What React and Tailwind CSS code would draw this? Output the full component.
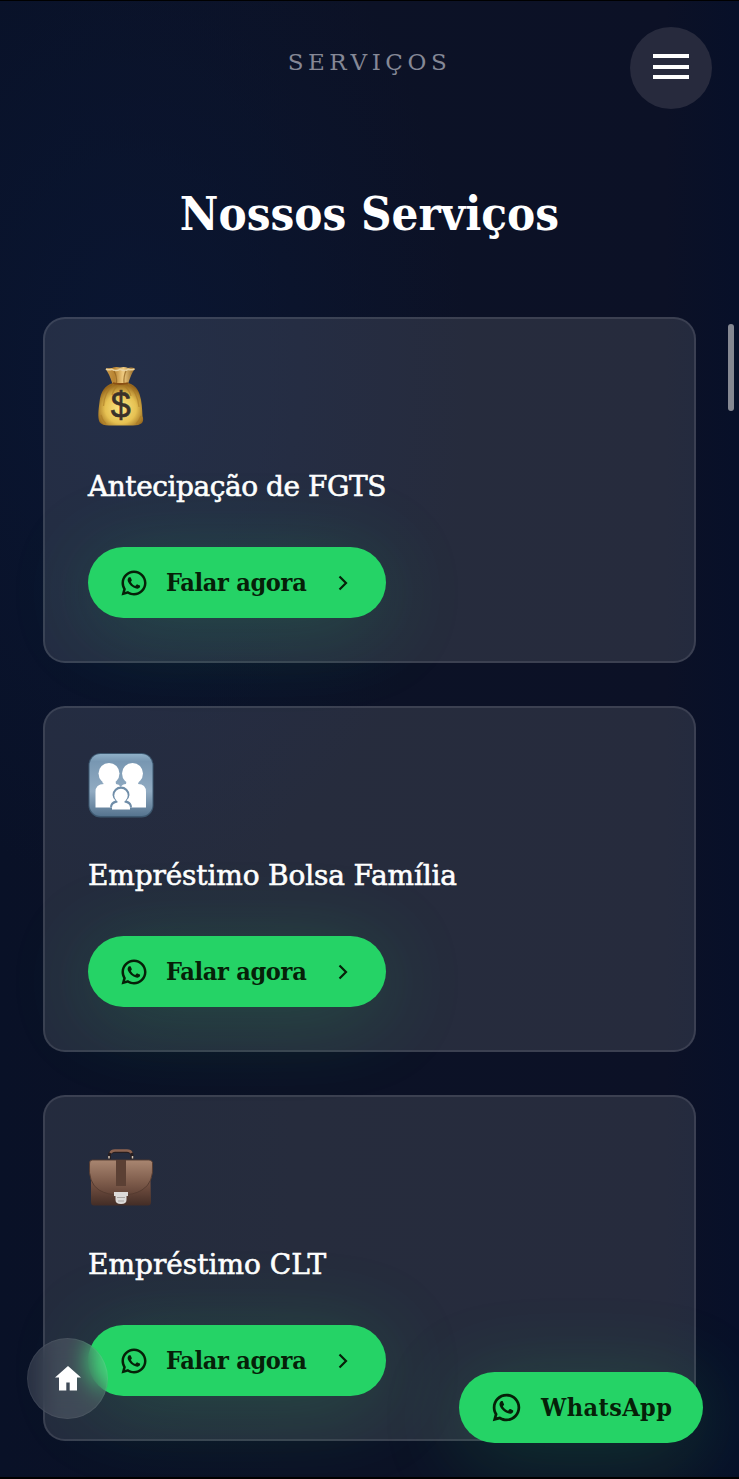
import React from "react";
import { RiWhatsappLine } from "react-icons/ri";

function MoneyBag() {
  return (
    <svg viewBox="0 0 66 66" className="block size-[66px]">
      <defs>
        <radialGradient id="bag" cx="0.5" cy="0.6" r="0.58">
          <stop offset="0" stopColor="#fbe684" />
          <stop offset="0.6" stopColor="#e6c152" />
          <stop offset="1" stopColor="#96661c" />
        </radialGradient>
        <linearGradient id="neck" x1="0" x2="1" y1="0" y2="0">
          <stop offset="0" stopColor="#c99a4c" />
          <stop offset="0.3" stopColor="#b98431" />
          <stop offset="0.6" stopColor="#f0cc82" />
          <stop offset="1" stopColor="#8d5f1d" />
        </linearGradient>
      </defs>
      <path d="M17.500 5Q21 9 24.500 20H40Q43 10 47 4.500Q44 3 40 4Q37 2.500 32 3.500Q27 2.500 24 4Q20 3.500 17.500 5Z" fill="url(#neck)" />
      <path d="M18 5Q21 6.500 24 5.300Q28 7.500 32 5.300Q37 7.500 40 5.300Q43 6.500 46.500 5" fill="none" stroke="#ead3a0" strokeWidth="1.500" />
      <path d="M26 7Q29 12 28.500 19M38 7Q35.500 12 36 19" fill="none" stroke="#8f611f" strokeOpacity="0.7" strokeWidth="1.300" />
      <path d="M25 19C17 21 12.500 28 11.500 38C10.500 46 9.500 53 11.500 58Q14 61.500 21 61.500H45Q51 61.500 54 59Q56 56 54.500 52C54 45 54 37 51.500 30C49 23 45 20.500 40 19Z" fill="url(#bag)" />
      <path d="M26 20C20 25 16 33 15.500 42M30 21C27 24 25 27 24 31M36 21C39 24 42 28 43 32M40 20C46 25 50 33 51 43M13 51Q14 56 18 60M53 52Q51 57 48 60" fill="none" stroke="#a87722" strokeOpacity="0.55" strokeWidth="1.300" />
      <path d="M25 19Q32 21 40 19" fill="none" stroke="#8a4f13" strokeWidth="1.800" />
      <text x="32.800" y="54" textAnchor="middle" fontFamily="Liberation Sans, sans-serif" fontSize="36" fill="#39312a" stroke="#39312a" strokeWidth="0.600">$</text>
    </svg>
  );
}

function Family() {
  return (
    <svg viewBox="0 0 66 66" className="block size-[66px]">
      <defs>
        <linearGradient id="tile" x1="0" x2="0" y1="0" y2="1">
          <stop offset="0" stopColor="#8fb0c8" />
          <stop offset="0.12" stopColor="#7897b2" />
          <stop offset="0.6" stopColor="#91abc2" />
          <stop offset="1" stopColor="#56748f" />
        </linearGradient>
      </defs>
      <rect x="0.500" y="0" width="65" height="64.500" rx="12" fill="#3d5870" />
      <rect x="1.500" y="1" width="63" height="62" rx="11" fill="url(#tile)" />
      <g fill="#fff">
        <circle cx="21" cy="20.500" r="10.500" />
        <circle cx="44.500" cy="20.500" r="10.500" />
        <path d="M7.500 54.500V39Q7.500 31 16 31Q14 30.500 14.500 28H27.500L28 31Q31 31 32.800 34Q34.500 31 38 31L38.500 28H51L50 31Q58 31 58 39V54.500Z" />
      </g>
      <path d="M22 54.500Q22 49 27.500 47.500Q24.500 44.500 24.500 42A8.500 8.500 0 0 1 41.500 42Q41.500 44.500 38.500 47.500Q44 49 44 54.500Z" fill="#6f8da8" />
      <circle cx="33" cy="42.500" r="6.700" fill="#fff" />
      <path d="M24 56.500V54.500Q24 50.500 29.500 49.500V47H36.500V49.500Q42 50.500 42 54.500V56.500Z" fill="#fff" />
    </svg>
  );
}

function Briefcase() {
  return (
    <svg viewBox="0 0 66 66" className="block size-[66px]">
      <defs>
        <linearGradient id="leather" x1="0" x2="0" y1="0" y2="1">
          <stop offset="0" stopColor="#a37c66" />
          <stop offset="0.5" stopColor="#765243" />
          <stop offset="1" stopColor="#432d26" />
        </linearGradient>
        <linearGradient id="flap" x1="0" x2="0" y1="0" y2="1">
          <stop offset="0" stopColor="#a98671" />
          <stop offset="0.6" stopColor="#805e4d" />
          <stop offset="1" stopColor="#624337" />
        </linearGradient>
      </defs>
      <path d="M21.500 17V12.500Q22 9.500 26 9.500H40Q43.500 9.500 44 12.500V17" fill="none" stroke="#261e20" strokeWidth="3" />
      <path d="M22.500 11Q23.500 8.500 27 8.500H39Q42.500 8.500 43.500 11" fill="none" stroke="#8c6350" strokeWidth="2.600" />
      <path d="M21 14V16.500M44.500 14V16.500" stroke="#d6c8b8" strokeWidth="1.500" />
      <path d="M3 19H62L63 60Q63 63.500 60 63.500H6Q3 63.500 3 60Z" fill="url(#leather)" />
      <path d="M4 18H61Q65 18.500 64.500 22Q66 41 54 48Q46 53 33 53Q19 53 11 48Q0 41 1.500 22Q1 18.500 4 18Z" fill="url(#flap)" stroke="#543a2f" strokeWidth="0.900" />
      <path d="M28 18H38V44H28Z" fill="#5b4034" />
      <path d="M26 50H40V54H38.500V58Q38.500 62 33 62Q27.500 62 27.500 58V54H26Z" fill="#dcdad8" />
      <path d="M29 55.500H37M30 59H36" stroke="#aaa6a3" strokeWidth="1.200" />
    </svg>
  );
}

function Chevron() {
  return (
    <svg viewBox="0 0 10 16" className="ml-[31px] block h-[16px] w-[10px] shrink-0">
      <path d="M1.500 1.500 8 8 1.500 14.500" fill="none" stroke="currentColor" strokeWidth="2.200" />
    </svg>
  );
}

function HomeIcon() {
  return (
    <svg viewBox="0 0 26 25" className="block h-[25px] w-[26px]">
      <path d="M13 0 26 11.500H22V24.500H14.700V16.500H11.300V24.500H4V11.500H0Z" fill="#fff" />
    </svg>
  );
}

const services = [
  { title: "Antecipação de FGTS", Icon: MoneyBag, spacing: "tracking-[-0.45px]" },
  { title: "Empréstimo Bolsa Família", Icon: Family, spacing: "tracking-[-0.15px]" },
  { title: "Empréstimo CLT", Icon: Briefcase, spacing: "tracking-[0px]" },
];

function ServiceCard({ title, Icon, spacing }) {
  return (
    <article className="flex h-[346px] flex-col items-start rounded-[22px] border-2 border-white/10 bg-white/[0.11] px-[43px] pt-[45px] pb-[43px]">
      <Icon />
      <h2 className={"mt-[35px] h-[44px] font-['DejaVu_Serif',serif] text-[28px] leading-[44px] whitespace-nowrap text-white [-webkit-text-stroke:0.6px_white] " + spacing}>
        {title}
      </h2>
      <button className="mt-auto flex h-[71px] w-[298px] items-center rounded-full bg-[#25d366] pl-[31px] text-[#062008] shadow-[0_10px_84px_rgba(37,211,102,0.22)]">
        <RiWhatsappLine className="size-[30px] shrink-0" />
        <span className="ml-[17px] w-[141px] text-left text-[25px] font-bold tracking-[-0.3px] whitespace-nowrap">Falar agora</span>
        <Chevron />
      </button>
    </article>
  );
}

export default function App() {
  return (
    <main className="relative h-[1479px] w-[739px] overflow-hidden border-t border-b-2 border-black bg-[#0c1125] bg-[radial-gradient(ellipse_340px_520px_at_130px_370px,#0a1632_0%,transparent_100%),linear-gradient(90deg,#091127_0%,#0c1226_40%,#0c1126_90%,#071029_100%)] font-['DejaVu_Serif_Condensed','DejaVu_Serif',serif]">
      <header className="flex h-[123px] justify-center pt-[45px]">
        <p className="h-[32px] font-['DejaVu_Serif',serif] text-[23px] leading-[32px] tracking-[4.6px] text-[#858896]">SERVIÇOS</p>
      </header>
      <h1 className="mt-[54px] text-center text-[47px] leading-[72px] font-bold whitespace-nowrap text-white">Nossos Serviços</h1>
      <section className="mt-[67px] flex flex-col gap-[43px] px-[43px]">
        {services.map((service) => (
          <ServiceCard key={service.title} {...service} />
        ))}
      </section>

      <button aria-label="Menu" className="absolute top-[26px] left-[630px] flex size-[82px] flex-col items-center gap-[6.5px] rounded-full bg-[#272a3d] pt-[27px]">
        <span className="h-[4px] w-[36px] bg-white" />
        <span className="h-[4px] w-[36px] bg-white" />
        <span className="h-[4px] w-[36px] bg-white" />
      </button>
      <div className="absolute top-[323px] left-[728px] h-[87px] w-[6px] rounded-full bg-[#858892]" />
      <a aria-label="Início" className="absolute top-[1337px] left-[27px] flex size-[81px] items-center justify-center rounded-full border border-white/5 bg-white/[0.13] backdrop-blur-[11px]">
        <HomeIcon />
      </a>
      <a className="absolute top-[1371px] left-[459px] flex h-[71px] w-[244px] items-center rounded-full bg-[#25d366] pl-[31px] text-[#062008] shadow-[0_10px_84px_rgba(37,211,102,0.22)]">
        <RiWhatsappLine className="size-[33px] shrink-0" />
        <span className="ml-[18px] text-[25px] font-bold tracking-[0.4px]">WhatsApp</span>
      </a>
    </main>
  );
}
